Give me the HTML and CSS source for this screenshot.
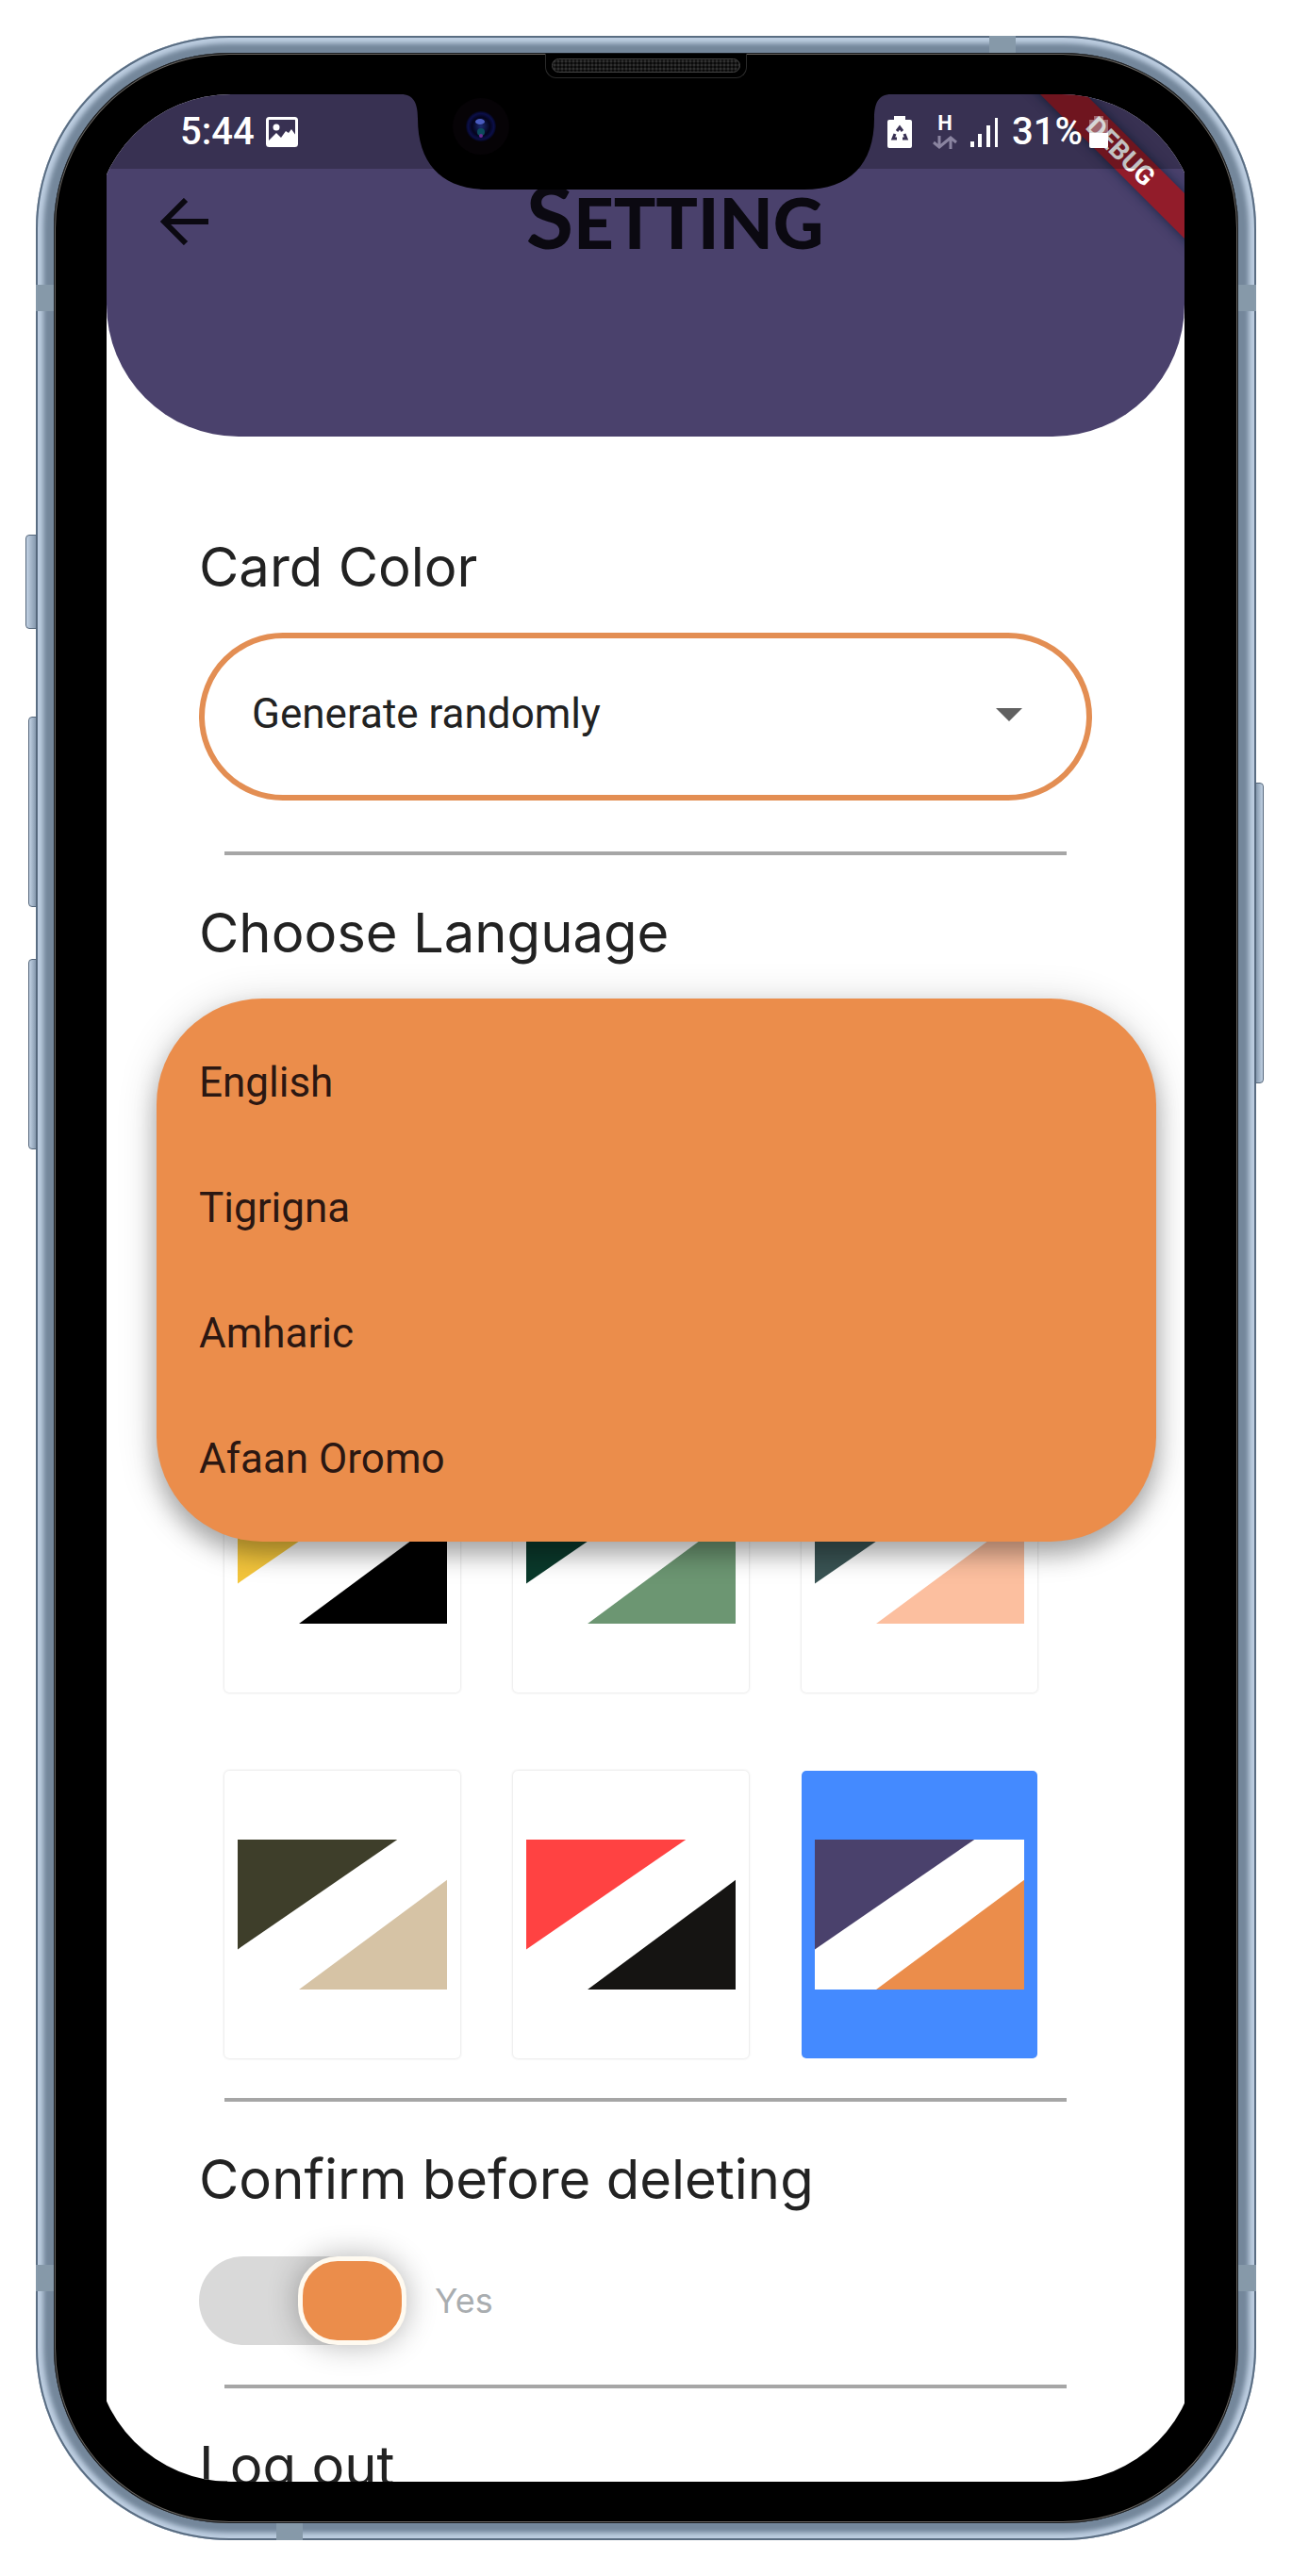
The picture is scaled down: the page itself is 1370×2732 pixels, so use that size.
FILE: index.html
```html
<!DOCTYPE html>
<html lang="en">
<head>
<meta charset="utf-8">
<meta name="viewport" content="width=device-width, initial-scale=1">
<title>Setting</title>
<link rel="stylesheet" href="styles.css">
</head>
<body>
<div class="phone">
  <span class="side-key key-mute"></span>
  <span class="side-key key-up"></span>
  <span class="side-key key-down"></span>
  <span class="side-key key-power"></span>
  <span class="band band-left-top"></span>
  <span class="band band-right-top"></span>
  <span class="band band-left-bottom"></span>
  <span class="band band-right-bottom"></span>
  <span class="band band-top"></span>
  <span class="band band-bottom"></span>

  <div class="bezel">
    <div class="speaker"><span class="grille"></span></div>
    <div class="display">
      <div class="app">
        <header class="header">
          <span class="debug">DEBUG</span>
          <div class="status">
            <div class="status-left">
              <span class="status-text">5:44</span>
              <svg width="34" height="32" viewBox="0 0 34 32" aria-hidden="true"><rect x="1.5" y="1.5" width="31" height="29" rx="2" fill="none" stroke="#fff" stroke-width="3"/><circle cx="11" cy="11" r="3.5" fill="#fff"/><path d="M3 25l8-8 5 5 5-7 3 2 3-4 5 7v10H3z" fill="#fff"/></svg>
            </div>
            <div class="status-right">
              <svg width="26" height="34" viewBox="0 0 26 34" aria-hidden="true"><path d="M7 0h12v4h5q2 0 2 2v26q0 2-2 2H2q-2 0-2-2V6q0-2 2-2h5z" fill="#fff"/><path d="M10 16l3-4 3 4M18 19l2 5h-4M10 24H6l2-5" fill="none" stroke="#393153" stroke-width="3"/></svg>
              <div class="network">
                <span class="network-type">H</span>
                <svg width="26" height="14" viewBox="0 0 26 14" fill="none" stroke="#8a84a0" stroke-width="3" aria-hidden="true"><path d="M7 0v12M1 7l6 5 6-5M19 14V2M13 7l6-5 6 5"/></svg>
              </div>
              <svg width="30" height="32" viewBox="0 0 30 32" fill="#fff" aria-hidden="true"><path d="M0 26h4v6H0zM8 18h4v14H8zM17 9h4v23h-4zM26 1h3v31h-3z"/></svg>
              <div class="charge">
                <span class="status-text">31%</span>
                <svg width="22" height="34" viewBox="0 0 22 34" aria-hidden="true"><path d="M6 0h10v4h5v14H1V4h5z" fill="#fff" fill-opacity=".35"/><path d="M1 18h20v14q0 2-2 2H3q-2 0-2-2z" fill="#fff"/></svg>
              </div>
            </div>
          </div>
          <div class="toolbar">
            <button class="back" type="button" aria-label="Back">
              <svg width="52" height="50" viewBox="0 0 52 50" fill="none" stroke="#0b0911" stroke-width="6" aria-hidden="true"><path d="M28 2L5 25l23 23M5 25h47"/></svg>
            </button>
            <h1 class="title"><span class="title-initial">S</span>ETTING</h1>
          </div>
        </header>

        <main class="content">
          <section>
            <h2 class="heading"><label for="card-color">Card Color</label></h2>
            <div class="dropdown">
              <select class="select" id="card-color"><option>Generate randomly</option></select>
              <svg class="caret" width="28" height="14" viewBox="0 0 28 14" aria-hidden="true"><path d="M0 0h28L14 14z" fill="#616161"/></svg>
            </div>
          </section>
          <hr class="rule rule-wide">
          <section>
            <h2 class="heading" id="language">Choose Language</h2>
            <div class="language">
              <div class="menu" role="listbox" aria-labelledby="language">
                <button class="menu-item" type="button" role="option">English</button>
                <button class="menu-item" type="button" role="option">Tigrigna</button>
                <button class="menu-item" type="button" role="option">Amharic</button>
                <button class="menu-item" type="button" role="option">Afaan Oromo</button>
              </div>
            </div>
            <div class="themes">
              <button class="theme" type="button" aria-label="Yellow and black"><svg class="swatch" viewBox="0 0 223 160"><path d="M0 0h170L0 117z" fill="#f3c53c"/><path d="M223 43v117H65z" fill="#000"/></svg></button>
              <button class="theme" type="button" aria-label="Green"><svg class="swatch" viewBox="0 0 223 160"><path d="M0 0h170L0 117z" fill="#0b3a2c"/><path d="M223 43v117H65z" fill="#6c9672"/></svg></button>
              <button class="theme" type="button" aria-label="Slate and peach"><svg class="swatch" viewBox="0 0 223 160"><path d="M0 0h170L0 117z" fill="#3a5454"/><path d="M223 43v117H65z" fill="#fcbf9f"/></svg></button>
              <button class="theme" type="button" aria-label="Olive and sand"><svg class="swatch" viewBox="0 0 223 160"><path d="M0 0h170L0 117z" fill="#3e3e2a"/><path d="M223 43v117H65z" fill="#d6c3a5"/></svg></button>
              <button class="theme" type="button" aria-label="Red and black"><svg class="swatch" viewBox="0 0 223 160"><path d="M0 0h170L0 117z" fill="#ff4242"/><path d="M223 43v117H65z" fill="#151412"/></svg></button>
              <button class="theme theme-selected" type="button" aria-label="Purple and orange" aria-pressed="true"><svg class="swatch" viewBox="0 0 223 160"><path d="M0 0h170L0 117z" fill="#4a416c"/><path d="M223 43v117H65z" fill="#eb8d4b"/></svg></button>
            </div>
          </section>
          <hr class="rule">
          <section>
            <h2 class="heading">Confirm before deleting</h2>
            <div class="confirm">
              <input class="toggle" id="confirm" type="checkbox" role="switch" checked>
              <label class="toggle-label" for="confirm">Yes</label>
            </div>
          </section>
          <hr class="rule">
          <h2 class="heading heading-cut">Log out</h2>
        </main>
      </div>
      <svg class="notch" width="520" height="101" viewBox="0 0 520 101" aria-hidden="true">
        <defs>
          <radialGradient id="lens"><stop offset="0" stop-color="#1a2a70"/><stop offset=".6" stop-color="#04041c"/><stop offset=".85" stop-color="#0b0f48"/><stop offset="1" stop-color="#05051a"/></radialGradient>
        </defs>
        <path d="M0 0C14 0 18 10 18 26C18 74 44 101 92 101H428C476 101 502 74 502 26C502 10 506 0 520 0z" fill="#000"/>
        <circle cx="85" cy="34" r="30" fill="#060306"/>
        <circle cx="85" cy="34" r="16" fill="url(#lens)"/>
        <ellipse cx="84" cy="29" rx="5" ry="3" fill="#4a5cc0"/>
        <circle cx="85" cy="40" r="4" fill="#0b4a5c"/>
        <circle cx="85" cy="44" r="2" fill="#6a2a90"/>
      </svg>
    </div>
  </div>
</div>
</body>
</html>
```
FILE: styles.css
```css
* {
  box-sizing: border-box;
}

body {
  margin: 0;
  background: #fff;
  font-family: Roboto, "Liberation Sans", sans-serif;
  color: #222;
}

button {
  border: 0;
  padding: 0;
  background: none;
  font: inherit;
  color: inherit;
}

/* Device shell */
.phone {
  position: relative;
  margin: 38px;
  padding: 18px 19px;
  border-radius: 205px;
  background: #74879b;
  box-shadow:
    inset 0 0 0 2px #5a6d82,
    inset 0 0 5px 8px #bccde0;
}

.bezel {
  position: relative;
  padding: 44px;
  border-radius: 186px;
  background: #000;
  box-shadow: inset 0 0 0 1px #15191e, inset 0 0 0 2px #6b6762;
}

.side-key {
  position: absolute;
  left: -8px;
  width: 9px;
  height: 202px;
  border: 1px solid #55677b;
  border-radius: 4px 0 0 4px;
  background: linear-gradient(90deg, #c2d2e4, #8699ae);
}

.key-mute {
  top: 529px;
  left: -11px;
  width: 12px;
  height: 100px;
}

.key-up {
  top: 722px;
}

.key-down {
  top: 979px;
}

.key-power {
  top: 792px;
  right: -8px;
  left: auto;
  height: 319px;
  border-radius: 0 4px 4px 0;
  background: linear-gradient(90deg, #8699ae, #c2d2e4);
}

.band {
  position: absolute;
  width: 19px;
  height: 28px;
  background: #8699a9;
}

.band-left-top {
  top: 264px;
  left: 0;
}

.band-right-top {
  top: 264px;
  right: 0;
}

.band-left-bottom {
  bottom: 264px;
  left: 0;
}

.band-right-bottom {
  right: 0;
  bottom: 264px;
}

.band-top {
  top: 0;
  right: 255px;
  width: 28px;
  height: 18px;
}

.band-bottom {
  bottom: 0;
  left: 255px;
  width: 28px;
  height: 18px;
}

.speaker {
  position: absolute;
  top: 1px;
  left: 50%;
  width: 214px;
  height: 26px;
  padding: 5px 6px;
  border: 1px solid #2a2a2a;
  border-top: 0;
  border-radius: 0 0 12px 12px;
  background: #000;
  transform: translateX(-50%);
}

.grille {
  display: block;
  height: 15px;
  border: 1px solid #444;
  border-radius: 8px;
  background: radial-gradient(circle, #303030 1px, #0a0a0a 2px) 0 0 / 4px 4px;
}

.display {
  position: relative;
  margin: 0 -1px;
  padding: 0 14px 0 13px;
  border-radius: 145px;
  overflow: hidden;
  background: #000;
}

.app {
  position: relative;
  overflow: hidden;
  background: #fff;
}

.notch {
  position: absolute;
  top: 0;
  left: 50%;
  transform: translateX(-50%);
}

/* Header */
.header {
  position: relative;
  height: 363px;
  border-radius: 0 0 140px 140px;
  overflow: hidden;
  background: #4a416c;
}

.status {
  position: relative;
  display: flex;
  justify-content: space-between;
  align-items: center;
  height: 79px;
  padding: 0 80px 0 78px;
  background: rgba(0, 0, 0, 0.24);
}

.status-left,
.status-right,
.charge {
  display: flex;
  align-items: center;
}

.status-left {
  gap: 12px;
}

.status-right {
  gap: 14px;
}

.charge {
  gap: 6px;
}

.status-text {
  font-size: 40px;
  line-height: 40px;
  font-weight: 500;
  color: #fff;
}

.network {
  display: flex;
  flex-direction: column;
  align-items: center;
  gap: 4px;
  margin-left: 8px;
}

.network-type {
  font-size: 22px;
  line-height: 18px;
  font-weight: 700;
  color: #fff;
}

.toolbar {
  display: flex;
  align-items: center;
  height: 112px;
  padding: 0 46px 0 56px;
}

.back {
  display: flex;
}

.title {
  flex: 1;
  margin: 0;
  padding-bottom: 6px;
  font-family: Lato, "Liberation Sans", sans-serif;
  font-size: 74px;
  line-height: 106px;
  font-weight: 900;
  text-align: center;
  color: #0b0911;
}

.title-initial {
  font-size: 92px;
  font-weight: 700;
}

.debug {
  position: absolute;
  top: 44px;
  right: -82px;
  width: 300px;
  font-size: 28px;
  line-height: 34px;
  font-weight: 700;
  text-align: center;
  color: #fff;
  background: #921c2a;
  box-shadow: 0 0 12px rgba(10, 30, 60, 0.8);
  transform: rotate(45deg);
}

/* Settings */
.content {
  padding: 104px 98px 0;
}

.heading {
  margin: 0 0 36px;
  font-family: Inter, "Liberation Sans", sans-serif;
  font-size: 58px;
  line-height: 68px;
  font-weight: 400;
}

.heading-cut {
  height: 51px;
  margin: 0;
  overflow: hidden;
}

.rule {
  height: 4px;
  margin: 42px 27px 48px;
  border: 0;
  background: #a6a6a6;
}

.rule-wide {
  margin-top: 54px;
}

.dropdown {
  position: relative;
}

.select {
  display: block;
  width: 100%;
  height: 178px;
  padding: 0 108px 6px 50px;
  border: 6px solid #e38e53;
  border-radius: 90px;
  appearance: none;
  background: #fff;
  font: 44px/52px Roboto, "Liberation Sans", sans-serif;
  color: #222;
}

.caret {
  position: absolute;
  top: 80px;
  right: 74px;
}

.language {
  position: relative;
  height: 431px;
}

.menu {
  position: absolute;
  top: 0;
  right: -68px;
  left: -45px;
  padding: 22px 0;
  border-radius: 112px;
  background: #eb8d4b;
  box-shadow:
    0 14px 24px rgba(0, 0, 0, 0.28),
    0 4px 44px rgba(0, 0, 0, 0.16);
}

.menu-item {
  display: block;
  width: 100%;
  height: 133px;
  padding: 0 45px;
  font-size: 44px;
  line-height: 52px;
  text-align: left;
  color: #2b1712;
}

.themes {
  display: grid;
  grid-template-columns: repeat(3, 1fr);
  gap: 83px 56px;
  padding: 0 58px 0 27px;
}

.theme {
  display: flex;
  align-items: center;
  height: 305px;
  padding: 0 14px;
  border-radius: 5px;
  box-shadow: 0 0 3px rgba(0, 0, 0, 0.18);
}

.theme-selected {
  background: #448aff;
  box-shadow: none;
}

.swatch {
  display: block;
  width: 100%;
  background: #fff;
}

.confirm {
  display: flex;
  align-items: center;
  gap: 30px;
  margin-top: 48px;
}

.toggle {
  display: flex;
  align-items: center;
  width: 220px;
  height: 94px;
  margin: 0;
  border-radius: 47px;
  appearance: none;
  background: #d9d9d9;
}

.toggle::before {
  content: "";
  width: 111px;
  height: 84px;
  margin-left: 105px;
  border: 5px solid #fffaf0;
  border-radius: 42px;
  background: #eb8d4b;
  box-shadow: 0 0 32px rgba(0, 0, 0, 0.3);
}

.toggle-label {
  font-family: Inter, "Liberation Sans", sans-serif;
  font-size: 36px;
  line-height: 44px;
  color: #a9adb0;
}
```
